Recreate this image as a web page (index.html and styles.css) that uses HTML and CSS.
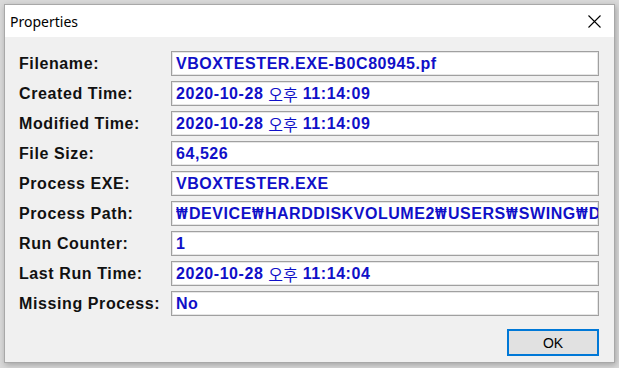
FILE: index.html
```html
<!DOCTYPE html>
<html lang="en">

<head>
    <meta charset="UTF-8">
    <meta name="viewport" content="width=device-width, initial-scale=1.0">
    <title>Properties</title>
    <link rel="stylesheet" href="styles.css">
</head>

<body>
    <div class="window">
        <!-- Title bar -->
        <div class="title-bar">
            <span class="title">Properties</span>
            <span class="close">
                <svg width="13" height="13" viewBox="0 0 13 13">
                    <path d="M0.5 0.5 L12.5 12.5 M12.5 0.5 L0.5 12.5" stroke="#000" stroke-width="1.1" fill="none"/>
                </svg>
            </span>
        </div>

        <!-- Properties list -->
        <div class="content">
            <div class="props">
                <label>Filename:</label>
                <div class="field">VBOXTESTER.EXE-B0C80945.pf</div>

                <label>Created Time:</label>
                <div class="field">2020-10-28 <span class="ko">오후</span> 11:14:09</div>

                <label>Modified Time:</label>
                <div class="field">2020-10-28 <span class="ko">오후</span> 11:14:09</div>

                <label>File Size:</label>
                <div class="field">64,526</div>

                <label>Process EXE:</label>
                <div class="field">VBOXTESTER.EXE</div>

                <label>Process Path:</label>
                <div class="field"><span class="won">₩</span>DEVICE<span class="won">₩</span>HARDDISKVOLUME2<span class="won">₩</span>USERS<span class="won">₩</span>SWING<span class="won">₩</span>DE</div>

                <label>Run Counter:</label>
                <div class="field">1</div>

                <label>Last Run Time:</label>
                <div class="field">2020-10-28 <span class="ko">오후</span> 11:14:04</div>

                <label>Missing Process:</label>
                <div class="field">No</div>
            </div>

            <div class="buttons">
                <button class="ok">OK</button>
            </div>
        </div>
    </div>
</body>

</html>
```

FILE: styles.css
```css
body {
    margin: 0;
    background-color: #d9d9d9;
    height: 368px;
    overflow: hidden;
}

.window {
    margin: 4px 0 0 4px;
    width: 609px;
    height: 357px;
    border: 1px solid #a8a8a8;
    background-color: #f0f0f0;
    box-shadow: 1px 2px 6px rgba(0, 0, 0, 0.25);
}

.title-bar {
    display: flex;
    align-items: center;
    justify-content: space-between;
    height: 32px;
    background-color: #fff;
    padding: 0 13px 0 5px;
}

.title {
    font-family: "Noto Sans", "Open Sans", sans-serif;
    font-size: 14px;
    color: #000;
    padding-top: 1px;
}

.close {
    display: flex;
    padding-top: 1px;
}

.content {
    padding: 14px 15px 0 14px;
}

.props {
    display: grid;
    grid-template-columns: 152px 428px;
    row-gap: 5px;
}

.props label {
    display: flex;
    align-items: center;
    font-family: "Liberation Sans", Arial, sans-serif;
    font-weight: bold;
    font-size: 16px;
    letter-spacing: 0.6px;
    color: #111;
}

.field {
    height: 25px;
    box-sizing: border-box;
    border: 1px solid #a0a0a0;
    box-shadow: inset 0 0 0 1px #e6e6e6;
    background-color: #fff;
    padding: 0 4px;
    display: flex;
    align-items: center;
    white-space: pre;
    overflow: hidden;
    font-family: "Liberation Sans", "Noto Sans CJK KR", Arial, sans-serif;
    font-weight: bold;
    font-size: 16px;
    letter-spacing: 0.55px;
    color: #1010c8;
}

.field .ko {
    font-family: "Noto Sans CJK KR", sans-serif;
    font-weight: normal;
    letter-spacing: 0;
}

.field .won {
    display: inline-block;
    width: 13px;
    font-family: "DejaVu Sans Condensed", "Liberation Sans", sans-serif;
    font-size: 15px;
    letter-spacing: 0;
    transform: scaleX(0.78);
    transform-origin: left center;
}

.buttons {
    display: flex;
    justify-content: flex-end;
    margin-top: 13px;
}

.ok {
    width: 92px;
    height: 27px;
    border: 2px solid #0078d7;
    background-color: #e1e1e1;
    font-family: "Liberation Sans", Arial, sans-serif;
    font-size: 14px;
    color: #000;
    padding: 0;
}
```
